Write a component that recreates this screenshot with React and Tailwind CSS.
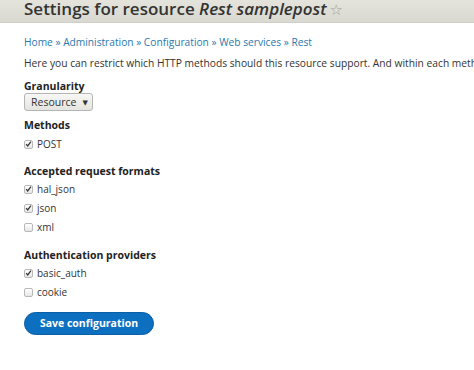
export default function App() {
  const Check = ({ checked, label }) => (
    <div className="flex items-center gap-[4px] h-[19px]">
      <span className="w-[9px] h-[9px] rounded-[2px] border border-[#b8b8b8] bg-[linear-gradient(#ffffff,#e6e6e6)] flex items-center justify-center">
        {checked && (
          <svg width="8" height="8" viewBox="0 0 8 8">
            <path d="M1.3 4.2 L3.1 6.2 L6.8 1.4" fill="none" stroke="#333" strokeWidth="1.4" />
          </svg>
        )}
      </span>
      <span className="text-[10px] text-[#333] leading-none">{label}</span>
    </div>
  );
  const Label = ({ children, cls = "" }) => (
    <div className={"text-[10.5px] font-bold text-[#222] leading-none " + cls}>{children}</div>
  );
  return (
    <div className="w-[474px] h-[370px] bg-white overflow-hidden" style={{ fontFamily: '"Open Sans", "DejaVu Sans", sans-serif' }}>
      <div className="h-[23px] bg-[linear-gradient(#e4e4dc,#d9d9d1)] border-b border-[#cfcfc7] pl-[24px] flex items-end overflow-hidden">
        <div className="text-[17px] font-semibold text-[#333] leading-none whitespace-nowrap mb-[5px]">
          Settings for resource <em className="italic">Rest samplepost</em>
          <span className="font-normal text-[#a0a0a0] text-[15px] ml-[3px]">☆</span>
        </div>
      </div>
      <div className="pl-[24px] pt-[14px]">
        <div className="text-[10.2px] text-[#2b79ad] leading-none whitespace-nowrap h-[10px]">
          Home » Administration » Configuration » Web services » Rest
        </div>
        <div className="text-[10.25px] text-[#333] leading-none whitespace-nowrap mt-[10.5px] h-[10px]">
          Here you can restrict which HTTP methods should this resource support. And within each method, which formats are supported.
        </div>
        <Label cls="mt-[13px]">Granularity</Label>
        <div className="mt-[2px] w-[69px] h-[18px] rounded-[3px] border border-[#b5b5b5] bg-[linear-gradient(#f7f7f5,#e4e4e0)] flex items-center pl-[6px] pr-[4px] justify-between">
          <span className="text-[10.5px] text-[#333] leading-none">Resource</span>
          <span className="text-[7px] text-[#333] leading-none">▼</span>
        </div>
        <Label cls="mt-[9px]">Methods</Label>
        <div className="mt-[4px]"><Check checked label="POST" /></div>
        <Label cls="mt-[12px]">Accepted request formats</Label>
        <div className="mt-[3.5px]">
          <Check checked label="hal_json" />
          <Check checked label="json" />
          <Check label="xml" />
        </div>
        <Label cls="mt-[13.5px]">Authentication providers</Label>
        <div className="mt-[3px]">
          <Check checked label="basic_auth" />
          <Check label="cookie" />
        </div>
        <button className="mt-[10.5px] w-[130px] h-[23px] rounded-full bg-[#0c6fbf] border border-[#0b5fa5] text-white text-[10.5px] font-bold leading-none block">
          Save configuration
        </button>
      </div>
    </div>
  );
}
